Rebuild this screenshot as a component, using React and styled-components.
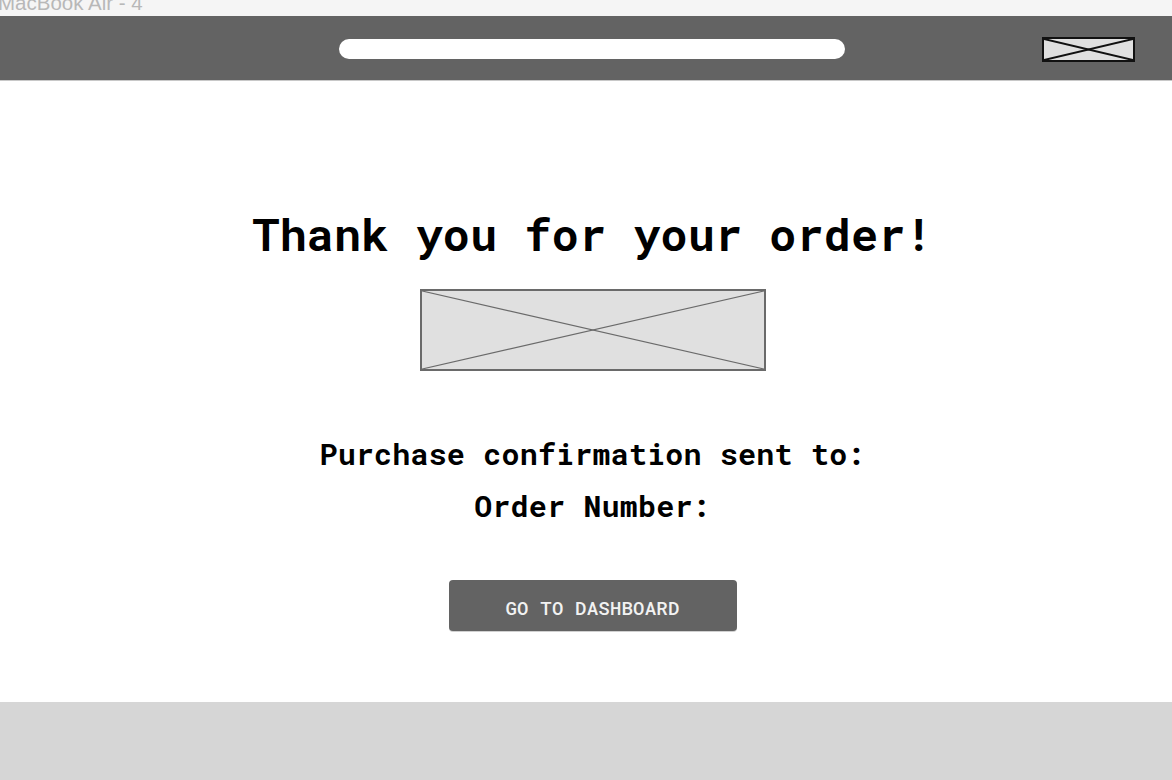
import React from 'react';
import styled, { createGlobalStyle } from 'styled-components';

const GlobalStyle = createGlobalStyle`
  html, body {
    margin: 0;
    padding: 0;
    background: #ffffff;
  }
`;

const Page = styled.div`
  width: 1172px;
  height: 780px;
  overflow: hidden;
  display: flex;
  flex-direction: column;
  font-family: "Roboto Mono", "DejaVu Sans Mono", monospace;
`;

const FrameLabel = styled.div`
  height: 16px;
  flex: none;
  background: #f5f5f5;
  overflow: hidden;
  display: flex;
  align-items: flex-end;
`;

const LabelText = styled.span`
  font-family: "Liberation Sans", Arial, sans-serif;
  font-size: 20.5px;
  line-height: 20px;
  color: #b8b8b8;
  margin-left: -2px;
  margin-bottom: 3px;
  white-space: nowrap;
`;

const Header = styled.header`
  height: 65px;
  flex: none;
  box-sizing: border-box;
  background: #636363;
  border-bottom: 1px solid #c8c8c8;
  display: flex;
  align-items: center;
  padding: 2px 37px 0 339px;
`;

const SearchBar = styled.div`
  width: 506px;
  height: 20px;
  border-radius: 10px;
  background: #ffffff;
`;

const Logo = styled.div`
  margin-left: auto;
  width: 93px;
  height: 25px;
  box-sizing: border-box;
  border: 2px solid #111111;
  background: #e0e0e0;
  display: flex;
`;

const Placeholder = styled.div`
  width: ${(p) => p.$w}px;
  height: ${(p) => p.$h}px;
  box-sizing: border-box;
  border: 2px solid #6a6a6a;
  background: #e0e0e0;
  display: flex;
`;

const Cross = ({ stroke, width }) => (
  <svg width="100%" height="100%" viewBox="0 0 100 100" preserveAspectRatio="none">
    <line x1="0" y1="0" x2="100" y2="100" stroke={stroke} strokeWidth={width} vectorEffect="non-scaling-stroke" />
    <line x1="100" y1="0" x2="0" y2="100" stroke={stroke} strokeWidth={width} vectorEffect="non-scaling-stroke" />
  </svg>
);

const Main = styled.main`
  flex: 1;
  display: flex;
  flex-direction: column;
  align-items: center;
  padding: 130px 0 0 13px;
`;

const Title = styled.h1`
  margin: 0 0 33px;
  font-size: 45px;
  line-height: 45px;
  font-weight: 700;
  letter-spacing: 0.2px;
  color: #000000;
  white-space: nowrap;
`;

const InfoLine = styled.p`
  margin: ${(p) => p.$top}px 0 0;
  font-size: 30px;
  line-height: 30px;
  font-weight: 700;
  letter-spacing: 0.2px;
  color: #000000;
  white-space: nowrap;
`;

const Button = styled.button`
  margin-top: 59px;
  width: 288px;
  height: 51px;
  border: none;
  border-radius: 4px;
  background: #636363;
  box-shadow: 0 1px 0 #d0d0d0;
  color: #f2f2f2;
  font-family: inherit;
  font-size: 19px;
  font-weight: 500;
  letter-spacing: 0.2px;
  padding-top: 4px;
  cursor: pointer;
`;

const Footer = styled.footer`
  height: 78px;
  flex: none;
  background: #d6d6d6;
`;

export default function App() {
  return (
    <Page>
      <GlobalStyle />
      <FrameLabel>
        <LabelText>MacBook Air - 4</LabelText>
      </FrameLabel>
      <Header>
        <SearchBar />
        <Logo>
          <Cross stroke="#111111" width={2} />
        </Logo>
      </Header>
      <Main>
        <Title>Thank you for your order!</Title>
        <Placeholder $w={346} $h={82}>
          <Cross stroke="#6a6a6a" width={1.2} />
        </Placeholder>
        <InfoLine $top={68}>Purchase confirmation sent to:</InfoLine>
        <InfoLine $top={22}>Order Number:</InfoLine>
        <Button>GO TO DASHBOARD</Button>
      </Main>
      <Footer />
    </Page>
  );
}
